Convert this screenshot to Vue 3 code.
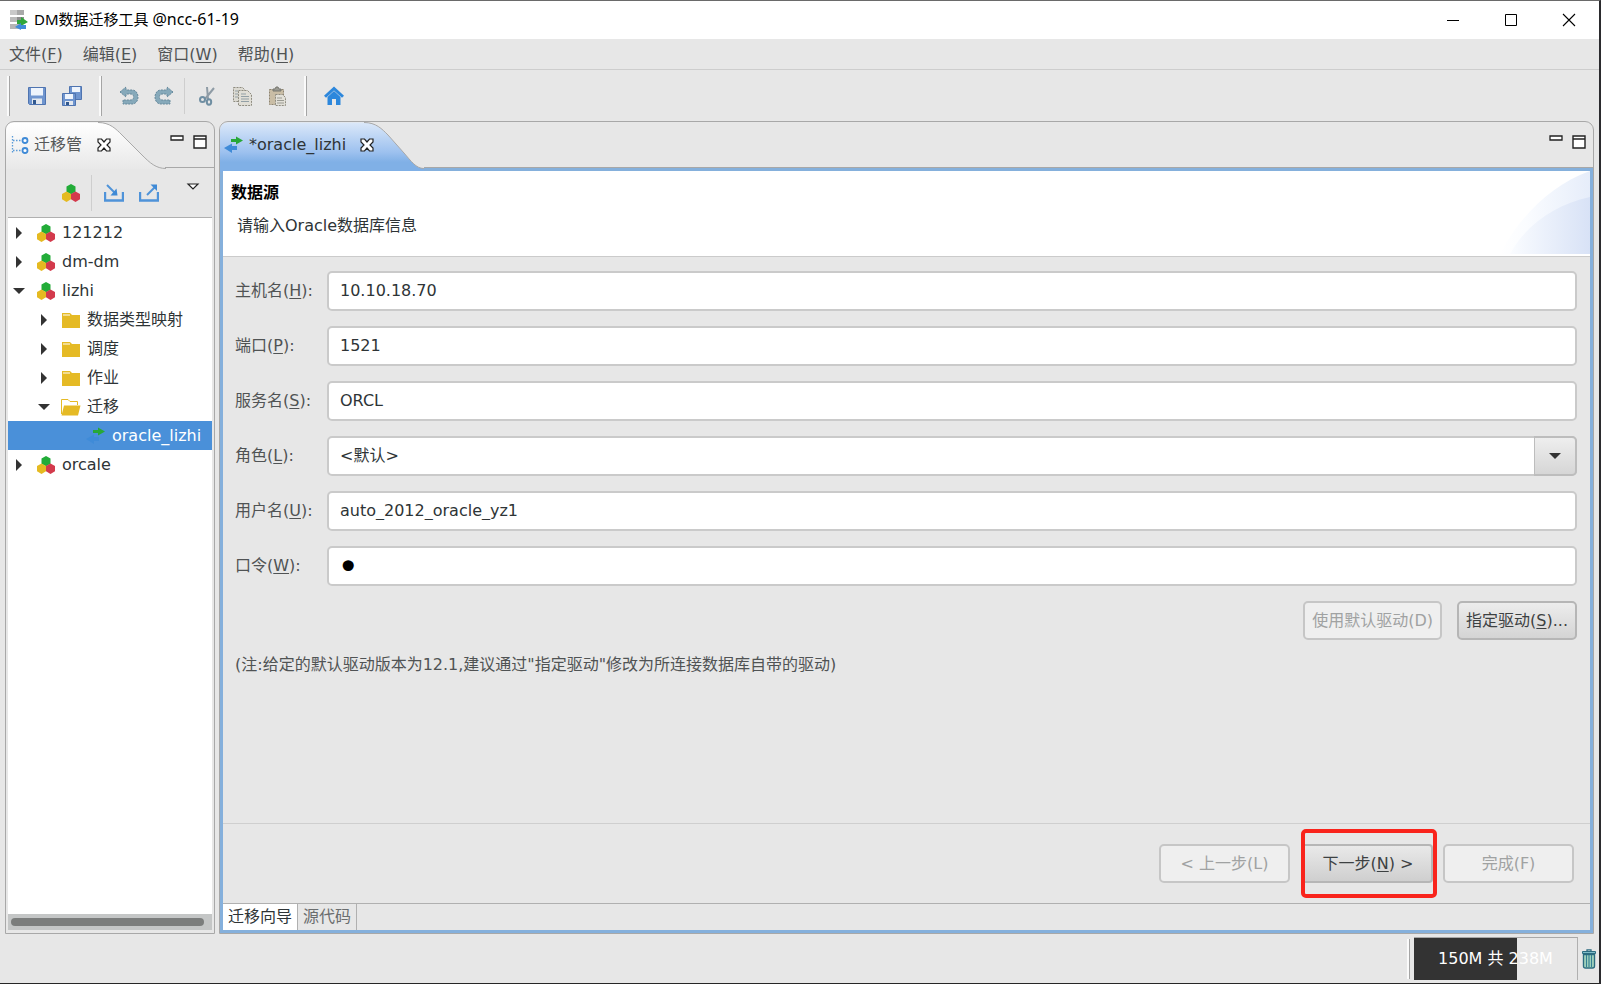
<script setup>
import { ref } from 'vue'

const menus = [
  { label: '文件', key: 'F' },
  { label: '编辑', key: 'E' },
  { label: '窗口', key: 'W' },
  { label: '帮助', key: 'H' },
]

const tree = [
  { level: 0, state: 'closed', icon: 'project', label: '121212' },
  { level: 0, state: 'closed', icon: 'project', label: 'dm-dm' },
  { level: 0, state: 'open', icon: 'project', label: 'lizhi' },
  { level: 1, state: 'closed', icon: 'folder', label: '数据类型映射' },
  { level: 1, state: 'closed', icon: 'folder', label: '调度' },
  { level: 1, state: 'closed', icon: 'folder', label: '作业' },
  { level: 1, state: 'open', icon: 'folder-open', label: '迁移' },
  { level: 2, state: 'leaf', icon: 'transfer', label: 'oracle_lizhi', selected: true },
  { level: 0, state: 'closed', icon: 'project', label: 'orcale' },
]

const fields = ref([
  { id: 'host', label: '主机名', key: 'H', type: 'text', value: '10.10.18.70' },
  { id: 'port', label: '端口', key: 'P', type: 'text', value: '1521' },
  { id: 'service', label: '服务名', key: 'S', type: 'text', value: 'ORCL' },
  { id: 'role', label: '角色', key: 'L', type: 'select', value: '<默认>' },
  { id: 'user', label: '用户名', key: 'U', type: 'text', value: 'auto_2012_oracle_yz1' },
  { id: 'password', label: '口令', key: 'W', type: 'password', value: '1' },
])
</script>

<template>
  <div class="window">
    <svg class="defs" width="0" height="0" aria-hidden="true">
      <defs>
        <linearGradient id="tabGrey" x1="0" y1="0" x2="0" y2="1">
          <stop offset="0" stop-color="#ffffff" />
          <stop offset="1" stop-color="#e8e8e8" />
        </linearGradient>
        <linearGradient id="tabBlue" x1="0" y1="0" x2="0" y2="1">
          <stop offset="0" stop-color="#dbe8f9" />
          <stop offset="0.6" stop-color="#9dc1ef" />
          <stop offset="0.8" stop-color="#80b0e6" />
          <stop offset="1" stop-color="#80b0e6" />
        </linearGradient>
        <linearGradient id="swooshOuter" x1="0" y1="0" x2="1" y2="0">
          <stop offset="0" stop-color="#ffffff" />
          <stop offset="0.3" stop-color="#fafcff" />
          <stop offset="1" stop-color="#e6edfa" />
        </linearGradient>
        <linearGradient id="swooshInner" x1="0" y1="0" x2="1" y2="0">
          <stop offset="0" stop-color="#fafcff" />
          <stop offset="1" stop-color="#d8e2f6" />
        </linearGradient>
        <symbol id="project" viewBox="0 0 20 20">
          <path d="M10 1l4.500 2.500v5.200L10 11.200 5.500 8.700V3.500z" fill="#22ac38" />
          <path d="M5.500 8.500l4.500 2.600v5.200L5.500 18.900 1 16.300v-5.200z" fill="#e5ba21" />
          <path d="M14.500 8.500l4.500 2.600v5.200l-4.500 2.600-4.500-2.600v-5.200z" fill="#d33a4c" />
        </symbol>
        <symbol id="folder" viewBox="0 0 20 20">
          <path d="M1 3h8l2 2h8v13H1z" fill="#e5ba25" />
          <path d="M2 5h7" stroke="#fff" stroke-width="1" />
        </symbol>
        <symbol id="folder-open" viewBox="0 0 20 20">
          <path d="M.5 17V2.500H7l2 2h7.500V8" fill="#fff" stroke="#e5ba25" />
          <path d="M3 8.500h16.500L17 18.500H.5z" fill="#e5ba25" />
        </symbol>
        <symbol id="transfer" viewBox="0 0 20 20">
          <path d="M7 4h5V1.500L19 5.500l-7 4V7H7z" fill="#27a838" />
          <path d="M13 11v4H8v3l-8-5 8-4.500V11z" fill="#3f8bd8" />
        </symbol>
        <symbol id="close" viewBox="0 0 14 14">
          <path d="M1 1h3.500L7 4l2.500-3H13v3L10 7l3 3v3H9.500L7 10l-2.500 3H1v-3l3-3-3-3z" fill="#fff" stroke="#222" stroke-width="1.200" />
        </symbol>
        <symbol id="pane-min" viewBox="0 0 14 14">
          <path d="M1 1h12v4H1z" fill="#fff" stroke="#222" stroke-width="1.300" />
        </symbol>
        <symbol id="pane-max" viewBox="0 0 14 14">
          <path d="M1 1h12v12H1zM1 4h12" fill="#fff" stroke="#222" stroke-width="1.400" />
        </symbol>
      </defs>
    </svg>

    <header class="titlebar">
      <svg class="app-icon" width="18" height="20" viewBox="0 0 18 20">
        <path d="M0 0h14v5H0z" fill="#a9a9a9" /><path d="M0 0h7v5H0z" fill="#c9c9c9" />
        <path d="M0 7h14v5H0z" fill="#8d8d8d" /><path d="M0 7h7v5H0z" fill="#bababa" />
        <path d="M0 14h9v5H0z" fill="#b5b5b5" />
        <path d="M7 10h4V7l7 5-7 4v-2H7z" fill="#2fa63a" />
        <path d="M16 15v4h-5v1l-6-3 6-4v2z" fill="#3f8bd8" />
      </svg>
      <h1>DM数据迁移工具 <span>@ncc-61-19</span></h1>
      <div class="window-buttons">
        <button aria-label="最小化"><svg width="14" height="14"><path d="M1 7.500h12" stroke="#000" /></svg></button>
        <button aria-label="最大化"><svg width="14" height="14"><path d="M1.500 1.500h11v11h-11z" fill="none" stroke="#000" /></svg></button>
        <button aria-label="关闭"><svg width="14" height="14"><path d="M1 1l12 12M13 1L1 13" stroke="#000" stroke-width="1.100" /></svg></button>
      </div>
    </header>

    <nav class="menubar">
      <button v-for="m in menus" :key="m.key">{{ m.label }}(<u>{{ m.key }}</u>)</button>
    </nav>

    <div class="toolbar">
      <i class="handle"></i>
      <div class="tools">
        <button aria-label="保存">
          <svg width="20" height="20" viewBox="0 0 20 20">
            <path d="M1.500 1.500h17v17h-16l-1-1z" fill="#6f95cf" stroke="#4f74b0" />
            <path d="M4 2h12v7.500H4z" fill="#eef4fc" /><path d="M5 12.500h10V18H5z" fill="#e3e8ef" /><path d="M6 14h3v4H6z" fill="#31588f" />
          </svg>
        </button>
        <button aria-label="全部保存">
          <svg width="22" height="22" viewBox="0 0 22 22">
            <path d="M8.500 1.500h12v13h-12z" fill="#6f95cf" stroke="#4f74b0" /><path d="M11 2h8v5h-8z" fill="#eef4fc" />
            <path d="M1.500 8.500h13v12h-13z" fill="#6f95cf" stroke="#4f74b0" /><path d="M4 9h8v5H4z" fill="#eef4fc" />
            <path d="M4 16h8v4H4z" fill="#e3e8ef" /><path d="M5 17h3v3H5z" fill="#31588f" />
          </svg>
        </button>
      </div>
      <i class="handle"></i>
      <div class="tools">
        <button aria-label="撤销">
          <svg width="20" height="20" viewBox="0 0 20 20">
            <path d="M1 6l6-5v3h6c8 0 8 14 0 14H4v-4h8c3.500 0 3.500-6 0-6H7v3z" fill="#86a9ba" stroke="#66899c" stroke-dasharray="2 1" />
          </svg>
        </button>
        <button aria-label="重做">
          <svg width="20" height="20" viewBox="0 0 20 20">
            <path d="M19 6l-6-5v3H7c-8 0-8 14 0 14h9v-4H8c-3.500 0-3.500-6 0-6h5v3z" fill="#86a9ba" stroke="#66899c" stroke-dasharray="2 1" />
          </svg>
        </button>
      </div>
      <i class="separator"></i>
      <div class="tools">
        <button aria-label="剪切">
          <svg width="18" height="20" viewBox="0 0 18 20">
            <path d="M16 2L7 13M9 1l1 12" fill="none" stroke="#8f9ca6" stroke-width="2" />
            <circle cx="4.500" cy="13.500" r="2.500" fill="none" stroke="#6f8ea2" stroke-width="2" />
            <ellipse cx="11" cy="16" rx="2.200" ry="2.700" fill="none" stroke="#6f8ea2" stroke-width="2" />
          </svg>
        </button>
        <button aria-label="复制">
          <svg width="20" height="20" viewBox="0 0 20 20">
            <path d="M1.500 1.500h9l2 2v12h-11z" fill="#dcdad2" stroke="#8f8c80" stroke-dasharray="2 1" />
            <path d="M6.500 4.500h9l4 4v11h-13z" fill="#e0ded6" stroke="#8f8c80" stroke-dasharray="2 1" />
            <path d="M3 5h3M3 8h3M3 11h3M9 8h5M9 10.500h8M9 13h8M9 15.500h8" stroke="#93a0a6" />
          </svg>
        </button>
        <button aria-label="粘贴">
          <svg width="20" height="20" viewBox="0 0 20 20">
            <path d="M2.500 3.500h14v15h-14z" fill="#c9bda5" stroke="#8f8470" stroke-dasharray="2 1" />
            <path d="M6 5V3h2l1-2h2l1 2h2v2z" fill="#9a9a92" stroke="#77776f" />
            <path d="M8.500 8.500h7l3 3v8h-10z" fill="#e2e0d8" stroke="#8f8c80" stroke-dasharray="2 1" />
            <path d="M10 12h5M10 14.500h7M10 17h7" stroke="#9a9a92" />
          </svg>
        </button>
      </div>
      <i class="handle"></i>
      <div class="tools">
        <button aria-label="主页">
          <svg width="20" height="20" viewBox="0 0 20 20">
            <path d="M10 .5l10 9.300-2 2-8-7.300-8 7.300-2-2z" fill="#2c87dc" />
            <path d="M10 5l6.500 6v8H12v-6H8v6H3.500v-8z" fill="#2c87dc" />
          </svg>
        </button>
      </div>
    </div>

    <main class="workspace">
      <aside class="pane side">
        <div class="pane-head">
          <svg class="tab-shape" width="160" height="47" viewBox="0 0 160 47">
            <path d="M0 47V8Q0 .5 8 .5H92C104 .5 110 7 116 13L136 33C144 41 150 46.500 160 46.500V47z" fill="url(#tabGrey)" />
            <path d="M92 .5C104 .5 110 7 116 13L136 33C144 41 150 46.500 160 46.500" fill="none" stroke="#a8a8a8" />
          </svg>
          <div class="tab">
            <svg width="18" height="20" viewBox="0 0 18 20">
              <path d="M1.500 1v18M2 5.500h8M2 15.500h8" fill="none" stroke="#5b9bd8" stroke-width="1.300" stroke-dasharray="1.500 1.500" />
              <circle cx="14" cy="5.500" r="2.500" fill="#fff" stroke="#3f8ad6" stroke-width="1.800" />
              <circle cx="14" cy="15.500" r="2.500" fill="#fff" stroke="#3f8ad6" stroke-width="1.800" />
            </svg>
            <span>迁移管</span>
            <button class="tab-close" aria-label="关闭视图"><svg width="14" height="14"><use href="#close" /></svg></button>
          </div>
          <div class="tab-rest"></div>
          <div class="pane-buttons">
            <button aria-label="最小化视图"><svg width="14" height="14"><use href="#pane-min" /></svg></button>
            <button aria-label="最大化视图"><svg width="14" height="14"><use href="#pane-max" /></svg></button>
          </div>
        </div>
        <div class="side-tools">
          <button aria-label="新建工程"><svg width="20" height="20"><use href="#project" /></svg></button>
          <i class="separator"></i>
          <button aria-label="导入">
            <svg width="20" height="20" viewBox="0 0 20 20">
              <path d="M1 9v8.500h18V9" fill="none" stroke="#4f93d9" stroke-width="2.400" />
              <path d="M3 2l8 8" stroke="#4f93d9" stroke-width="2" /><path d="M13.500 12.500H6.500l6-7z" fill="#3f8ad6" />
            </svg>
          </button>
          <button aria-label="导出">
            <svg width="20" height="20" viewBox="0 0 20 20">
              <path d="M1 9v8.500h18V9" fill="none" stroke="#4f93d9" stroke-width="2.400" />
              <path d="M8 12l8-8" stroke="#4f93d9" stroke-width="2" /><path d="M18 1.500V8l-6.500-6.500z" fill="#3f8ad6" />
            </svg>
          </button>
          <button class="view-menu" aria-label="视图菜单"><svg width="14" height="8"><path d="M2 1h10L7 6z" fill="#fff" stroke="#222" stroke-width="1.200" /></svg></button>
        </div>
        <ul class="tree">
          <li v-for="n in tree" :key="n.label" :class="['level-' + n.level, { selected: n.selected }]">
            <svg class="arrow" width="16" height="16" viewBox="0 0 16 16">
              <path v-if="n.state === 'closed'" d="M5 2l6 6-6 6z" />
              <path v-if="n.state === 'open'" d="M2 5h12l-6 6z" />
            </svg>
            <svg class="node-icon" width="20" height="20"><use :href="'#' + n.icon" /></svg>
            <span>{{ n.label }}</span>
          </li>
        </ul>
        <div class="scrollbar"><div class="thumb"></div></div>
      </aside>

      <section class="pane editor">
        <div class="pane-head">
          <svg class="tab-shape" width="204" height="50" viewBox="0 0 204 50">
            <path d="M0 50V8Q0 .5 8 .5H144C156 .5 162 7 168 13L184 31C191 39 196 46.500 204 46.500V50z" fill="url(#tabBlue)" />
            <path d="M144 .5C156 .5 162 7 168 13L184 31C191 39 196 46.500 204 46.500" fill="none" stroke="#a8a8a8" />
          </svg>
          <div class="tab">
            <svg width="20" height="20"><use href="#transfer" /></svg>
            <span>*oracle_lizhi</span>
            <button class="tab-close" aria-label="关闭编辑器"><svg width="14" height="14"><use href="#close" /></svg></button>
          </div>
          <div class="tab-rest"></div>
          <div class="pane-buttons">
            <button aria-label="最小化编辑器"><svg width="14" height="14"><use href="#pane-min" /></svg></button>
            <button aria-label="最大化编辑器"><svg width="14" height="14"><use href="#pane-max" /></svg></button>
          </div>
        </div>

        <div class="editor-body">
          <div class="banner">
            <h2>数据源</h2>
            <p>请输入Oracle数据库信息</p>
            <svg class="swoosh" width="90" height="83" viewBox="0 0 90 83">
              <path d="M0 83C18 48 50 14 90 0V83z" fill="url(#swooshOuter)" />
              <path d="M10 83C26 54 54 34 90 26V83z" fill="url(#swooshInner)" />
            </svg>
          </div>

          <form class="form" @submit.prevent>
            <template v-for="f in fields" :key="f.id">
              <label :for="f.id">{{ f.label }}(<u>{{ f.key }}</u>):</label>
              <div v-if="f.type === 'select'" class="combo">
                <select :id="f.id" v-model="f.value">
                  <option>&lt;默认&gt;</option>
                </select>
                <span class="combo-button"><svg width="12" height="6"><path d="M0 0h12L6 6z" fill="#333" /></svg></span>
              </div>
              <input v-else :id="f.id" v-model="f.value" :type="f.type" :class="f.type" autocomplete="off" />
            </template>
            <div class="driver-buttons">
              <button type="button" class="btn" disabled>使用默认驱动(D)</button>
              <button type="button" class="btn">指定驱动(<u>S</u>)...</button>
            </div>
            <p class="note">(注:给定的默认驱动版本为12.1,建议通过"指定驱动"修改为所连接数据库自带的驱动)</p>
          </form>

          <div class="wizard-buttons">
            <button class="btn" disabled>&lt; 上一步(L)</button>
            <div class="next">
              <button class="btn default">下一步(<u>N</u>) &gt;</button>
            </div>
            <button class="btn" disabled>完成(F)</button>
          </div>

          <div class="page-tabs">
            <button class="active">迁移向导</button>
            <button>源代码</button>
          </div>
        </div>
      </section>
    </main>

    <footer class="statusbar">
      <i class="handle"></i>
      <div class="heap"><span>150M 共 238M</span></div>
      <button class="trash" aria-label="垃圾回收">
        <svg width="14" height="20" viewBox="0 0 14 20">
          <path d="M5 2V.8h4V2" fill="none" stroke="#2c6c80" stroke-width="1.300" />
          <path d="M.5 2.500h13v2H.5z" fill="#7fbcc8" stroke="#2c6c80" />
          <path d="M1.500 5.500h11V17q0 2-2 2h-7q-2 0-2-2z" fill="#a9d9bf" stroke="#2c6c80" stroke-width="1.400" />
          <path d="M4.500 6v12M7 6v12M9.500 6v12" stroke="#357f93" stroke-width="1.200" />
        </svg>
      </button>
    </footer>
  </div>
</template>

<style>
body {
  margin: 0;
  background: #e7e7e7;
}
</style>

<style scoped>
* {
  box-sizing: border-box;
}
.window {
  display: flex;
  flex-direction: column;
  min-height: 100vh;
  border-top: 1px solid #6a6a6a;
  border-right: 2px solid #2b2b2e;
  border-bottom: 1px solid #262626;
  background: #e7e7e7;
  color: #2e3436;
  font: 16px/20px "DejaVu Sans", "Noto Sans CJK SC", sans-serif;
}
.defs {
  position: absolute;
}
svg {
  display: block;
  flex: none;
}
button {
  margin: 0;
  padding: 0;
  border: 0;
  background: none;
  color: inherit;
  font: inherit;
  white-space: nowrap;
}
u {
  text-underline-offset: 2px;
}
h1,
h2,
p,
ul {
  margin: 0;
  padding: 0;
}

.titlebar {
  display: flex;
  align-items: center;
  height: 38px;
  padding-left: 10px;
  background: #fff;
}
.titlebar h1 {
  flex: 1;
  margin-left: 6px;
  padding-bottom: 2px;
  color: #000;
  font: 15px/20px "Noto Sans", "Noto Sans CJK SC", sans-serif;
}
.titlebar h1 span {
  font-size: 16px;
}
.window-buttons {
  display: flex;
  padding-right: 1px;
}
.window-buttons button {
  display: grid;
  place-items: center;
  width: 58px;
  height: 38px;
}

.menubar {
  display: flex;
  gap: 20px;
  height: 31px;
  padding: 2px 0 0 9px;
  border-bottom: 1px solid #cdcdcd;
  color: #505354;
}

.toolbar {
  display: flex;
  align-items: center;
  height: 51px;
  padding-left: 8px;
}
.tools {
  display: flex;
  margin: 0 11px 0 9px;
}
.tools button {
  display: grid;
  place-items: center;
  width: 35px;
  height: 40px;
}
.handle {
  width: 3px;
  height: 40px;
  margin-left: -1px;
  border-left: 2px solid #fafafa;
  background: #a5a5a5;
}
.separator {
  width: 1px;
  height: 36px;
  background: #cecece;
}
.toolbar .separator {
  margin: 0 -5px 0 -8px;
}

.workspace {
  display: flex;
  flex: 1;
  gap: 4px;
  padding: 0 5px;
}
.pane {
  display: flex;
  flex-direction: column;
  border: 1px solid #a8a8a8;
  border-radius: 9px 9px 0 0;
}
.side {
  flex: none;
  width: 210px;
}
.editor {
  flex: 1;
  min-width: 0;
}
.pane-head {
  position: relative;
  display: flex;
  height: 46px;
}
.tab-shape {
  position: absolute;
  left: 0;
  bottom: -1px;
  border-top-left-radius: 8px;
}
.editor .tab-shape {
  top: 0;
  bottom: auto;
}
.tab {
  position: relative;
  display: flex;
  align-items: center;
  gap: 5px;
  width: 159px;
  padding-left: 5px;
  color: #555859;
}
.tab-rest {
  flex: 1;
  border-bottom: 1px solid #a8a8a8;
}
.tab-close {
  margin-left: 10px;
}
.editor .tab {
  gap: 5px;
  width: 204px;
  padding-left: 4px;
  color: #2e3436;
}
.editor .tab-close {
  margin-left: 9px;
}
.pane-buttons {
  position: absolute;
  top: 13px;
  right: 7px;
  display: flex;
  gap: 9px;
}

.side-tools {
  display: flex;
  align-items: center;
  height: 50px;
  margin: 0 2px;
  padding: 0 12px 0 53px;
  border-bottom: 1px solid #b0b0b0;
}
.side-tools .separator {
  margin: 0 12px 0 10px;
}
.side-tools button + button {
  margin-left: 15px;
}
.side-tools .view-menu {
  margin: 0 0 12px auto !important;
}
.tree {
  flex: 1;
  margin: 0 2px;
  background: #fff;
  list-style: none;
}
.tree li {
  display: flex;
  align-items: center;
  height: 29px;
  white-space: nowrap;
}
.tree .level-0 {
  padding-left: 3px;
}
.tree .level-1 {
  padding-left: 28px;
}
.tree .level-2 {
  padding-left: 53px;
}
.tree .arrow {
  fill: #333;
}
.tree .node-icon {
  margin: 0 6px 0 9px;
}
.tree .selected {
  background: #4a90d9;
  color: #fff;
}
.scrollbar {
  height: 16px;
  margin: 0 2px 3px;
  padding: 4px 8px 4px 3px;
  background: #c4c6c6;
}
.thumb {
  height: 8px;
  border-radius: 4px;
  background: #7b7d7c;
}

.editor-body {
  display: flex;
  flex: 1;
  flex-direction: column;
  border: 3px solid #85b0dc;
}
.banner {
  position: relative;
  height: 86px;
  padding: 12px 8px;
  border-bottom: 1px solid #cbcbcb;
  background: #fff;
}
.banner h2 {
  color: #000;
  font-size: 16px;
  line-height: 20px;
}
.banner p {
  margin: 13px 0 0 6px;
}
.swoosh {
  position: absolute;
  top: 0;
  right: 0;
}

.form {
  display: grid;
  flex: 1;
  grid-template-columns: 77px 1fr;
  align-content: start;
  align-items: center;
  gap: 15px;
  padding: 14px 13px 15px 12px;
}
.form label,
.note {
  color: #505354;
  white-space: nowrap;
}
.form input,
.form select {
  width: 100%;
  height: 40px;
  margin: 0;
  padding: 0 11px 2px;
  border: 2px solid #cacaca;
  border-radius: 5px;
  background: #fff;
  color: #2e3436;
  font: inherit;
  outline: 0;
}
.form input.password {
  padding: 1px 8px 0;
  color: #000;
  font-size: 38px;
}
.form select {
  padding-bottom: 0;
  appearance: none;
}
.combo {
  position: relative;
}
.combo-button {
  position: absolute;
  top: 0;
  right: 0;
  display: grid;
  place-items: center;
  width: 43px;
  height: 40px;
  border: 2px solid #bdbdbd;
  border-left-width: 1px;
  border-radius: 0 5px 5px 0;
  background: linear-gradient(#eeeeee, #d6d6d6);
  pointer-events: none;
}
.driver-buttons {
  display: flex;
  grid-column: 1 / -1;
  gap: 15px;
  justify-content: flex-end;
}
.btn {
  height: 39px;
  padding: 0 7px;
  border: 2px solid #b6b6b6;
  border-radius: 5px;
  background: linear-gradient(#ededed, #d4d4d4);
  color: #3d4142;
}
.btn:disabled {
  border-color: #c6c6c6;
  background: #efefef;
  color: #a0a2a2;
}
.note {
  grid-column: 1 / -1;
}

.wizard-buttons {
  display: flex;
  align-items: center;
  justify-content: flex-end;
  height: 80px;
  padding-right: 16px;
  border-top: 1px solid #cfcfcf;
}
.wizard-buttons .btn {
  width: 131px;
}
.next {
  margin: 0 6px 0 11px;
  padding: 11px 0;
  border: 4px solid #f9241c;
  border-radius: 5px;
}
.wizard-buttons .default {
  width: 128px;
  border-left-width: 0;
  border-radius: 0 4px 4px 0;
  background: linear-gradient(#e9e9e9, #cfcfcf);
}
.page-tabs {
  display: flex;
  height: 27px;
  border-top: 1px solid #b0b0b0;
}
.page-tabs button {
  padding: 0 5px;
  border-right: 1px solid #b0b0b0;
  color: #6a6d6e;
}
.page-tabs .active {
  background: #fff;
  color: #2e3436;
}

.statusbar {
  display: flex;
  align-items: center;
  justify-content: flex-end;
  gap: 4px;
  height: 49px;
}
.heap {
  display: grid;
  place-items: center;
  width: 164px;
  height: 43px;
  border-top: 1px solid #a8a8a8;
  border-right: 1px solid #b0b0b0;
  background: linear-gradient(90deg, #333 63%, #e7e7e7 63%);
  color: #fff;
}
.trash {
  margin-right: 3px;
}
</style>
